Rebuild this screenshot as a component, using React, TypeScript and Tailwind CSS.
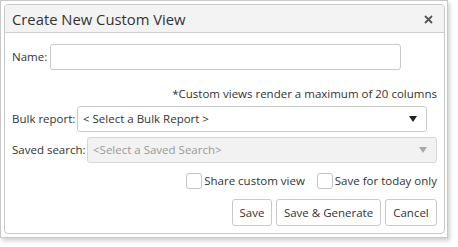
import React from "react";

function Checkbox({ label }: { label: string }) {
  return (
    <label className="flex items-center gap-[2px] whitespace-nowrap">
      <span className="block w-[16px] h-[16px] rounded-[3px] border border-[#c4c4c4] bg-white" />
      <span>{label}</span>
    </label>
  );
}

function Btn({ children, w }: { children: React.ReactNode; w: string }) {
  return (
    <button
      className={`h-[27px] ${w} border border-[#c9c9c9] rounded-[3px] bg-white text-[#333] flex items-center justify-center whitespace-nowrap`}
    >
      {children}
    </button>
  );
}

export default function App() {
  return (
    <div
      className="w-[458px] h-[247px] bg-white text-[11.5px] text-[#333] leading-[16px]"
      style={{ fontFamily: '"Open Sans", "Noto Sans", Arial, sans-serif' }}
    >
      <div className="w-[448px] h-[238px] border border-[#c8c8c8] bg-white pl-[3px] pr-[2px] py-[3px] shadow-[2px_3px_4px_rgba(0,0,0,0.18)]">
        <div className="h-full border border-[#c7c7c7] rounded-[4px] flex flex-col overflow-hidden">
          <div className="h-[28px] bg-[#f3f3f3] border-b border-[#cfcfcf] flex items-center justify-between pl-[7px] pr-[11px] shrink-0">
            <span className="text-[14.8px] text-[#333] whitespace-nowrap">Create New Custom View</span>
            <svg width="9" height="9" viewBox="0 0 9 9" className="mt-[1px]">
              <path d="M1 1 L8 8 M8 1 L1 8" stroke="#555" strokeWidth="1.8" strokeLinecap="butt" />
            </svg>
          </div>
          <div className="flex flex-col pl-[7px] pr-[7px] pt-[11px]">
            <div className="flex items-center">
              <span className="w-[38px] shrink-0 whitespace-nowrap">Name:</span>
              <div className="w-[351px] h-[26px] border border-[#c9c9c9] rounded-[3px] bg-white" />
            </div>
            <div className="mt-[16px] h-[16px] text-right whitespace-nowrap">*Custom views render a maximum of 20 columns</div>
            <div className="mt-[4px] flex items-center">
              <span className="w-[65px] shrink-0 whitespace-nowrap">Bulk report:</span>
              <div className="w-[350px] h-[26px] border border-[#c9c9c9] rounded-[3px] bg-white flex items-center justify-between pl-[5px] pr-[9px]">
                <span className="whitespace-nowrap">&lt; Select a Bulk Report &gt;</span>
                <svg width="8" height="6" viewBox="0 0 8 6">
                  <path d="M0 0 H8 L4 6 Z" fill="#222" />
                </svg>
              </div>
            </div>
            <div className="mt-[5px] flex items-center">
              <span className="w-[75px] shrink-0 whitespace-nowrap">Saved search:</span>
              <div className="w-[350px] h-[26px] border border-[#d6d6d6] rounded-[3px] bg-[#f2f2f2] flex items-center justify-between pl-[5px] pr-[9px]">
                <span className="text-[#999] whitespace-nowrap">&lt;Select a Saved Search&gt;</span>
                <svg width="8" height="6" viewBox="0 0 8 6">
                  <path d="M0 0 H8 L4 6 Z" fill="#aaa" />
                </svg>
              </div>
            </div>
            <div className="mt-[10px] flex items-center justify-end gap-[12px]">
              <Checkbox label="Share custom view" />
              <Checkbox label="Save for today only" />
            </div>
            <div className="mt-[10px] flex items-center justify-end gap-[4px]">
              <Btn w="w-[40px]">Save</Btn>
              <Btn w="w-[105px]">Save &amp; Generate</Btn>
              <Btn w="w-[52px]">Cancel</Btn>
            </div>
          </div>
        </div>
      </div>
    </div>
  );
}
